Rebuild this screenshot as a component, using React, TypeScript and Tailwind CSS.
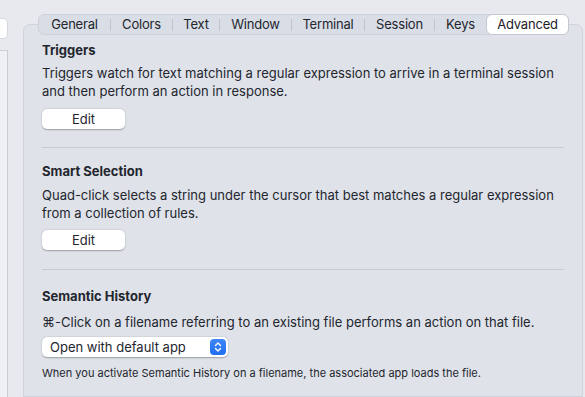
import React from 'react';

// widths measured from the reference so the separators land where macOS puts them
const tabs = [
  { label: 'General', w: 'w-[71px]' },
  { label: 'Colors', w: 'w-[61px]' },
  { label: 'Text', w: 'w-[46px]' },
  { label: 'Window', w: 'w-[71px]' },
  { label: 'Terminal', w: 'w-[72px]' },
  { label: 'Session', w: 'w-[69px]' },
  { label: 'Keys', w: 'w-[51px]' },
];

const font = { fontFamily: 'Inter, "Noto Sans", sans-serif' };

const EditButton = () => (
  <div className="flex">
    <button className="w-[83px] h-[20px] rounded-[5px] bg-white text-[13px] leading-none text-[#23262e] shadow-[0_0.5px_1.5px_rgba(0,0,0,0.3)]">
      Edit
    </button>
  </div>
);

const TabBar = () => (
  <div className="flex items-center h-[21px] w-[531px] -mt-[11px] ml-[14px] rounded-[6px] bg-[#d9dde5] border border-[#cdd2db]">
    {tabs.map((tab, i) => (
      <React.Fragment key={tab.label}>
        <div className={`${tab.w} shrink-0 flex items-center justify-center text-[13px] tracking-[-0.2px] text-[#23262e]`}>
          {tab.label}
        </div>
        {i < tabs.length - 1 && <div className="w-px h-[12px] shrink-0 bg-[#bfc4ce]" />}
      </React.Fragment>
    ))}
    <div className="flex-1 h-[21px] -my-px -mr-px flex items-center justify-center rounded-[6px] bg-white border border-[#c3c8d2] text-[13px] tracking-[-0.2px] text-[#1d2027]">
      Advanced
    </div>
  </div>
);

export default function App() {
  return (
    <div className="w-[585px] h-[397px] overflow-hidden bg-[#e7e9ee] flex text-[#23262e]" style={font}>
      {/* left edge of the sidebar */}
      <div className="w-[8px] flex flex-col shrink-0">
        <div className="mt-[18px] h-[21px] bg-white rounded-r-[5px] border-r border-y border-[#d3d7de]" />
        <div className="mt-[11px] flex-1 bg-[#eef0f4] border-t border-r border-[#c9cdd5]" />
      </div>

      <div className="ml-[15px] mt-[24px] mr-[2px] flex-1 flex flex-col rounded-t-[7px] border border-[#cfd3db] bg-[#dfe2e9]">
        <TabBar />

        <div className="pl-[18px] pr-[18px] flex flex-col">
          <div className="mt-[7px] text-[13px] leading-[16px] font-bold">Triggers</div>
          <p className="mt-[6px] text-[13px] leading-[18px]">
            Triggers watch for text matching a regular expression to arrive in a terminal session and then perform an action in response.
          </p>
          <div className="mt-[9px]">
            <EditButton />
          </div>
          <div className="mt-[18px] h-px bg-[#c6cbd5]" />

          <div className="mt-[15px] text-[13px] leading-[16px] font-bold">Smart Selection</div>
          <p className="mt-[7px] text-[13px] leading-[18px]">
            Quad-click selects a string under the cursor that best matches a regular expression from a collection of rules.
          </p>
          <div className="mt-[8px]">
            <EditButton />
          </div>
          <div className="mt-[19px] h-px bg-[#c6cbd5]" />

          <div className="mt-[18px] text-[13px] leading-[16px] font-bold">Semantic History</div>
          <p className="mt-[9px] text-[13px] leading-[18px]">
            ⌘-Click on a filename referring to an existing file performs an action on that file.
          </p>
          <div className="flex mt-[6px]">
            <div className="w-[186px] h-[20px] rounded-[5px] bg-white shadow-[0_0.5px_1.5px_rgba(0,0,0,0.3)] flex items-center justify-between pl-[8px] pr-[2px]">
              <span className="text-[13px] leading-none text-[#23262e]">Open with default app</span>
              <span className="w-[16px] h-[16px] rounded-[4px] bg-gradient-to-b from-[#3e86f8] to-[#1f6ef0] flex items-center justify-center">
                <svg width="8" height="12" viewBox="0 0 8 12" fill="none" stroke="white" strokeWidth="1.4" strokeLinecap="round" strokeLinejoin="round">
                  <path d="M1.5 4.5 L4 2 L6.5 4.5" />
                  <path d="M1.5 7.5 L4 10 L6.5 7.5" />
                </svg>
              </span>
            </div>
          </div>
          <p className="mt-[9px] text-[11px] leading-[14px]">
            When you activate Semantic History on a filename, the associated app loads the file.
          </p>
        </div>
      </div>
    </div>
  );
}
